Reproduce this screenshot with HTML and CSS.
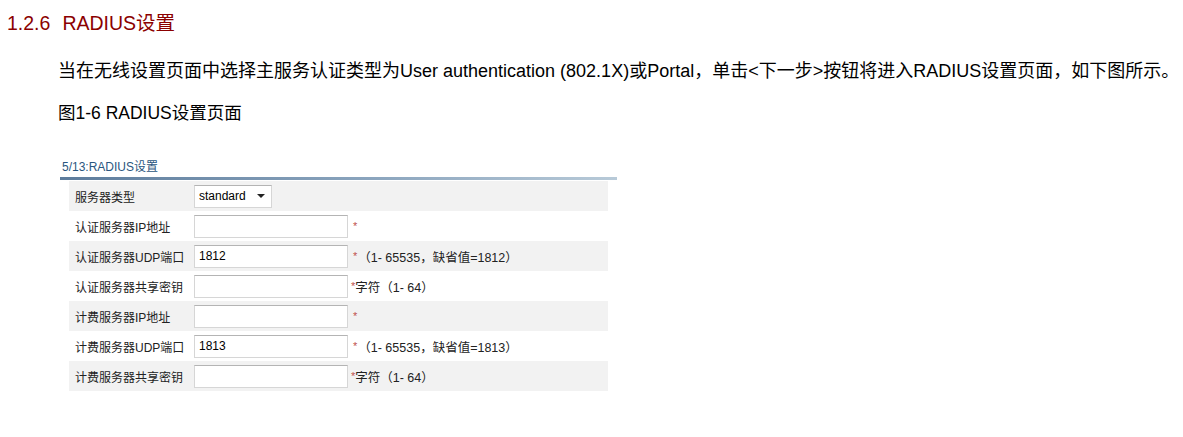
FILE: index.html
```html
<!DOCTYPE html>
<html lang="zh-CN">
<head>
<meta charset="utf-8">
<title>RADIUS设置</title>
<link rel="stylesheet" href="styles.css">
</head>
<body>
<h2 class="section-title"><span class="sec-num">1.2.6</span>RADIUS设置</h2>
<p class="desc">当在无线设置页面中选择主服务认证类型为User authentication (802.1X)或Portal，单击&lt;下一步&gt;按钮将进入RADIUS设置页面，如下图所示。</p>
<p class="fig-title">图1-6 RADIUS设置页面</p>
<div class="figure">
  <div class="panel-title">5/13:RADIUS设置</div>
  <div class="rule"></div>
  <div class="form">
    <div class="row alt">
      <div class="label">服务器类型</div>
      <div class="field"><span class="select">standard<span class="caret"></span></span></div>
      <div class="note"></div>
    </div>
    <div class="row">
      <div class="label">认证服务器IP地址</div>
      <div class="field"><span class="input"></span></div>
      <div class="note"><span class="req">*</span></div>
    </div>
    <div class="row alt">
      <div class="label">认证服务器UDP端口</div>
      <div class="field"><span class="input">1812</span></div>
      <div class="note"><span class="req">*</span><span class="hint gap">（1- 65535，缺省值=1812）</span></div>
    </div>
    <div class="row">
      <div class="label">认证服务器共享密钥</div>
      <div class="field"><span class="input"></span></div>
      <div class="note tight"><span class="req">*</span><span class="hint">字符（1- 64）</span></div>
    </div>
    <div class="row alt">
      <div class="label">计费服务器IP地址</div>
      <div class="field"><span class="input"></span></div>
      <div class="note"><span class="req">*</span></div>
    </div>
    <div class="row">
      <div class="label">计费服务器UDP端口</div>
      <div class="field"><span class="input">1813</span></div>
      <div class="note"><span class="req">*</span><span class="hint gap">（1- 65535，缺省值=1813）</span></div>
    </div>
    <div class="row alt">
      <div class="label">计费服务器共享密钥</div>
      <div class="field"><span class="input"></span></div>
      <div class="note tight"><span class="req">*</span><span class="hint">字符（1- 64）</span></div>
    </div>
  </div>
</div>
</body>
</html>
```
FILE: styles.css
```css
html, body {
  margin: 0;
  padding: 0;
  background: #ffffff;
}
body {
  font-family: "Liberation Sans", "Noto Sans CJK SC", sans-serif;
  color: #000000;
}
.section-title {
  margin: 0;
  padding: 10px 0 0 7px;
  font-size: 19.5px;
  line-height: 26px;
  font-weight: normal;
  color: #8b0000;
}
.sec-num {
  margin-right: 12px;
}
.desc {
  margin: 23px 0 0 58px;
  font-size: 18px;
  line-height: 24px;
  white-space: nowrap;
  color: #000;
}
.fig-title {
  margin: 18px 0 0 58px;
  font-size: 17.5px;
  line-height: 24px;
  color: #000;
}
.figure {
  margin: 34px 0 0 60px;
  width: 557px;
}
.panel-title {
  padding-left: 2px;
  font-size: 12px;
  line-height: 16px;
  color: #2a5680;
}
.rule {
  margin-top: 2px;
  height: 3px;
  background: linear-gradient(to right, #5d7c9c, #8aa4bd 55%, #b8cad8);
}
.form {
  margin: 1px 0 0 9px;
  width: 539px;
}
.row {
  display: flex;
  align-items: center;
  height: 30px;
  font-size: 12px;
  color: #222;
}
.row.alt {
  background: #f2f2f2;
}
.label {
  width: 119px;
  padding-left: 6px;
  white-space: nowrap;
}
.field {
  width: 154px;
}
.input, .select {
  display: flex;
  align-items: center;
  box-sizing: border-box;
  height: 23px;
  border: 1px solid #d6d6d6;
  border-top-color: #b4b4b4;
  background: #fff;
  padding-left: 4px;
  font-size: 12px;
  color: #000;
}
.input {
  width: 154px;
}
.select {
  width: 78px;
  justify-content: space-between;
  padding-right: 6px;
}
.caret {
  width: 0;
  height: 0;
  border-left: 4px solid transparent;
  border-right: 4px solid transparent;
  border-top: 4px solid #222;
}
.note {
  display: flex;
  align-items: center;
  padding-left: 5px;
  white-space: nowrap;
}
.note.tight {
  padding-left: 3px;
}
.req {
  color: #c0504d;
  font-size: 11px;
}
.hint {
  font-size: 12.5px;
  color: #222;
}
.hint.gap {
  margin-left: 1px;
}
```
